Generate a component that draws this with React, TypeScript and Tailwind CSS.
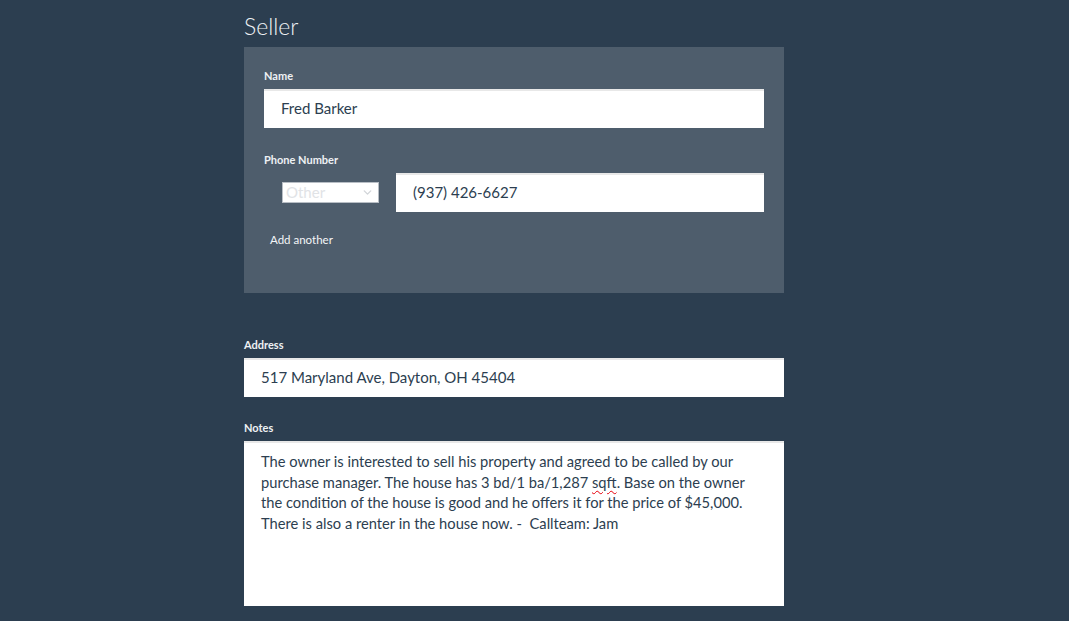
import { ChevronDown } from "lucide-react";

const font = { fontFamily: "Lato, 'Open Sans', sans-serif" };

function Label({ children }: { children: React.ReactNode }) {
  return <div className="text-[11px] font-bold leading-[14px] text-[#eef1f4]">{children}</div>;
}

function Field({ value, className = "" }: { value: string; className?: string }) {
  return (
    <div
      className={`flex h-[39px] items-center bg-white px-[17px] text-[15px] text-[#2c3e50] shadow-[inset_0_2px_0_#e8e8e8] ${className}`}
    >
      {value}
    </div>
  );
}

export default function App() {
  return (
    <div className="min-h-[621px] w-full bg-[#2c3e50]" style={font}>
      <div className="ml-[244px] w-[540px] pt-[11px]">
        <h2 className="text-[23px] font-light leading-[30px] text-[#eef1f4]">Seller</h2>

        <section className="mt-[6px] bg-[#4e5d6c] px-[20px] pt-[22px] pb-[45px]">
          <Label>Name</Label>
          <Field value="Fred Barker" className="mt-[6px]" />

          <div className="mt-[25px]">
            <Label>Phone Number</Label>
          </div>
          <div className="mt-[6px] flex items-center gap-[17px] pl-[18px]">
            <div className="flex h-[21px] w-[97px] items-center justify-between border border-[#b8bec5] bg-white pl-[3px] pr-[4px] text-[15px] text-[#e1e3e6]">
              <span>Other</span>
              <ChevronDown size={13} strokeWidth={2.5} className="text-[#d2d5d9]" />
            </div>
            <Field value="(937) 426-6627" className="flex-1" />
          </div>
          <div className="mt-[20px] pl-[6px] text-[11.5px] leading-[16px] text-[#f4f6f8]">Add another</div>
        </section>

        <div className="mt-[45px]">
          <Label>Address</Label>
        </div>
        <Field value="517 Maryland Ave, Dayton, OH 45404" className="mt-[6px]" />

        <div className="mt-[24px]">
          <Label>Notes</Label>
        </div>
        <div className="mt-[6px] h-[165px] bg-white px-[17px] pt-[10px] text-[14.7px] leading-[20.7px] text-[#2c3e50] shadow-[inset_0_2px_0_#e8e8e8]">
          The owner is interested to sell his property and agreed to be called by our purchase manager. The house has 3
          bd/1 ba/1,287{" "}
          <span className="underline decoration-red-600 decoration-wavy decoration-1 underline-offset-[2px]">sqft</span>.
          Base on the owner the condition of the house is good and he offers it for the price of $45,000. There is also a
          renter in the house now. -&nbsp; Callteam: Jam
        </div>
      </div>
    </div>
  );
}
